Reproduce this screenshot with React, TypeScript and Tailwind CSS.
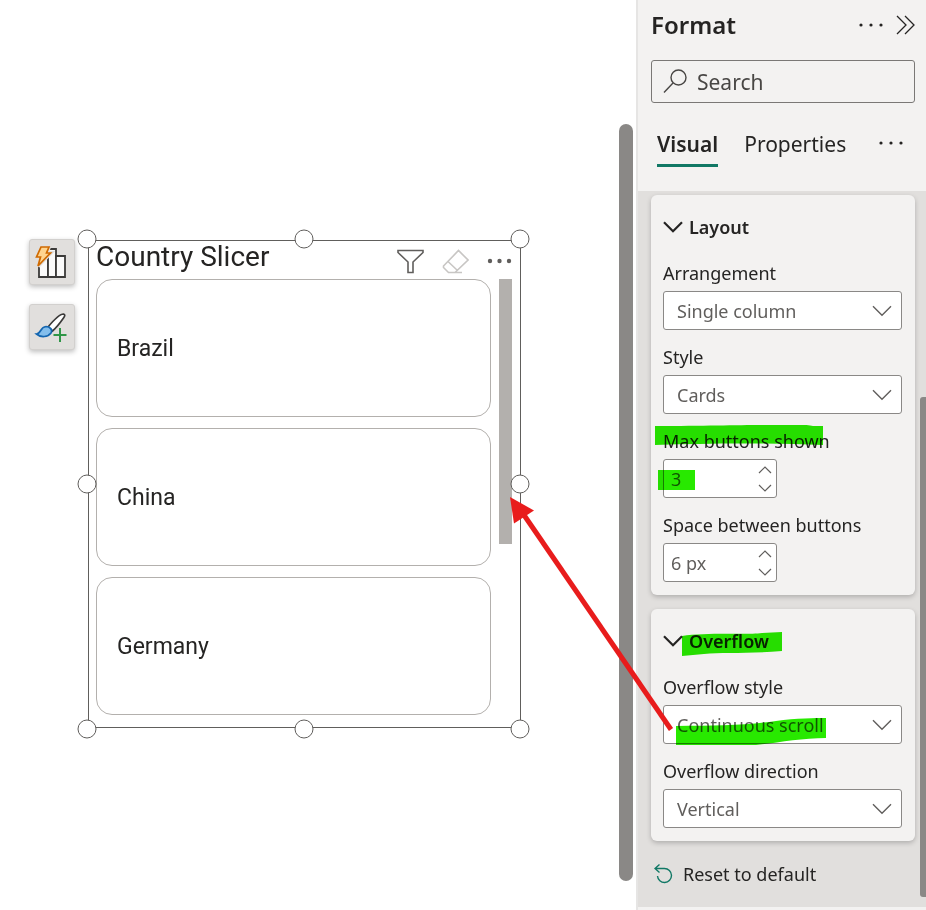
import type { ReactNode } from "react";

const countries = ["Brazil", "China", "Germany"];

const handles = [
  "left-0 top-0",
  "left-1/2 top-0",
  "left-full top-0",
  "left-0 top-1/2",
  "left-full top-1/2",
  "left-0 top-full",
  "left-1/2 top-full",
  "left-full top-full",
];

const MoreIcon = () => (
  <svg className="block" width="26" height="6" viewBox="0 0 26 6" fill="currentColor">
    <circle cx="3" cy="3" r="1.6" />
    <circle cx="13" cy="3" r="1.6" />
    <circle cx="23" cy="3" r="1.6" />
  </svg>
);

const Chevron = ({ className = "", weight = 1.4 }: { className?: string; weight?: number }) => (
  <svg className={className} width="20" height="12" viewBox="0 0 20 12" fill="none" stroke="currentColor" strokeWidth={weight}>
    <path d="M1 1.2 10 10.2 19 1.2" />
  </svg>
);

/* Marker stroke laid over a label */
const Marker = ({ className, d, viewBox }: { className: string; d: string; viewBox: string }) => (
  <svg className={`absolute pointer-events-none mix-blend-multiply ${className}`} viewBox={viewBox} fill="#28e900">
    <path d={d} />
  </svg>
);

const Field = ({ id, label, marker, children }: { id: string; label: string; marker?: ReactNode; children: ReactNode }) => (
  <div className="relative flex flex-col items-start gap-1.5">
    <label htmlFor={id} className="text-[18px] leading-6 text-[#252423] whitespace-nowrap">
      {label}
    </label>
    {children}
    {marker}
  </div>
);

const SelectBox = ({ id, value }: { id: string; value: string }) => (
  <div className="relative w-full">
    <select
      id={id}
      defaultValue={value}
      className="appearance-none w-full h-[39px] rounded-[3px] border border-[#8a8886] bg-white pt-0.5 pl-[13px] pr-10 text-[18px] text-[#605e5c]"
    >
      <option>{value}</option>
    </select>
    <Chevron className="absolute right-[10px] top-[14px] text-[#605e5c] pointer-events-none" />
  </div>
);

const Spinner = ({ id, value }: { id: string; value: string }) => (
  <div className="flex items-center w-[114px] h-[39px] rounded-[3px] border border-[#8a8886] bg-white pl-[7px] pr-1">
    <input id={id} defaultValue={value} className="min-w-0 flex-1 bg-transparent pt-0.5 text-[18px] text-[#605e5c] outline-none" />
    <div className="flex flex-col gap-2.5 text-[#605e5c]">
      <button aria-label="Increase">
        <svg width="14" height="8" viewBox="0 0 14 8" fill="none" stroke="currentColor" strokeWidth="1.2" className="block">
          <path d="M1 7 7 1 13 7" />
        </svg>
      </button>
      <button aria-label="Decrease">
        <svg width="14" height="8" viewBox="0 0 14 8" fill="none" stroke="currentColor" strokeWidth="1.2" className="block">
          <path d="M1 1 7 7 13 1" />
        </svg>
      </button>
    </div>
  </div>
);

const Section = ({ title, marker, children }: { title: string; marker?: ReactNode; children: ReactNode }) => (
  <section className="relative rounded-md bg-[#f3f2f1] pl-3 pr-[13px] pt-[18px] pb-[13px] shadow-[0_2px_5px_rgba(0,0,0,0.22)]">
    <h2 className="mb-5">
      <button className="flex items-center gap-1.5 text-[18px] leading-7 font-semibold text-[#252423]">
        <Chevron weight={2.2} />
        {title}
      </button>
    </h2>
    {marker}
    <div className="flex flex-col gap-[15px]">{children}</div>
  </section>
);

const Slicer = () => (
  <div className="relative mt-px flex-1 border border-[#605e5c] pl-[7px] pr-2 pb-3 font-[Roboto,sans-serif]">
    <header className="flex items-center justify-between h-[38px] pb-1.5">
      <h1 className="text-[28px] leading-8 text-[#252423] whitespace-nowrap">Country Slicer</h1>
      <div className="flex items-center gap-[18px] pt-2 text-[#605e5c]">
        <button aria-label="Filters">
          <svg width="27" height="25" viewBox="0 0 27 25" fill="none" stroke="currentColor" strokeWidth="1.6" className="block">
            <path d="M1 1.5H26V3.5L16 13V23.5H11V13L1 3.5Z" />
          </svg>
        </button>
        <button aria-label="Clear selections" className="text-[#c8c6c4]">
          <svg width="27" height="25" viewBox="0 0 27 25" fill="none" stroke="currentColor" strokeWidth="1.6" className="block">
            <path d="M1.5 17 16.5 1.5 26 11 13 23.5H6.5L1.5 18.5ZM6 12.5 15.5 21.5M12 23.5H20" />
          </svg>
        </button>
        <button aria-label="More options">
          <svg width="25" height="6" viewBox="0 0 25 6" fill="currentColor" className="block">
            <circle cx="3" cy="3" r="2.2" />
            <circle cx="12.5" cy="3" r="2.2" />
            <circle cx="22" cy="3" r="2.2" />
          </svg>
        </button>
      </div>
    </header>
    <div className="flex gap-2">
      <div className="flex flex-1 flex-col gap-[11px]">
        {countries.map((country) => (
          <button
            key={country}
            className="h-[138px] rounded-[16px] border border-[#b3b0ad] px-5 pt-0.5 text-left text-[23px] text-[#252423]"
          >
            {country}
          </button>
        ))}
      </div>
      <div className="w-[13px] h-[265px] bg-[#b3b0ad]" />
    </div>
    {/* Resize handles */}
    <div className="absolute -left-0.5 right-0 -top-0.5 -bottom-0.5 pointer-events-none">
      {handles.map((place) => (
        <span
          key={place}
          className={`absolute ${place} size-[19px] -translate-x-1/2 -translate-y-1/2 rounded-full border border-[#605e5c] bg-white`}
        />
      ))}
    </div>
  </div>
);

const toolButton =
  "flex size-[46px] items-center justify-center rounded-[3px] border border-[#d2d0ce] bg-[#e1dfdd] pr-0.5 shadow-[0_2px_5px_rgba(0,0,0,0.25)]";

const Canvas = () => (
  <main className="flex flex-1 items-start pl-[29px] pr-[3px]">
    <div className="flex flex-1 items-start gap-[13px] pt-[239px]">
      <div className="flex flex-col gap-[19px]">
        <button aria-label="Suggested visuals" className={toolButton}>
          <svg width="34" height="34" viewBox="0 0 34 34">
            <g fill="#fafafa" stroke="#3b3a39" strokeWidth="1.8">
              <path d="M5 13H14V32H5Z" />
              <path d="M14 4H22V32H14Z" />
              <path d="M22 11H31V32H22Z" />
            </g>
            <path d="M7 2H15L12.5 8H16.5L4 21 6.5 12H2.5Z" fill="#ffd78a" stroke="#e1dfdd" strokeWidth="4" />
            <path d="M7 2H15L12.5 8H16.5L4 21 6.5 12H2.5Z" fill="#ffd590" stroke="#d06a00" strokeWidth="1.7" />
          </svg>
        </button>
        <button aria-label="Format visual" className={toolButton}>
          <svg width="34" height="34" viewBox="0 0 34 34" fill="none">
            <path d="M14 17C19 11 26 4 29.5 4Q32 4.500 29.5 8C26 13 22 18 18.5 21Z" fill="#fff" stroke="#3b3a39" strokeWidth="1.7" />
            <path d="M2.5 24C7 24 6 17 12 16.5 16 16.5 19 20 17 23 14 27 7 28 2.5 24Z" fill="#83beec" stroke="#1466b0" strokeWidth="1.7" />
            <path d="M26 18V32M19.5 25H32.5" stroke="#2f9647" strokeWidth="2" />
          </svg>
        </button>
      </div>
      <Slicer />
    </div>
    <div className="ml-[98px] mt-[124px] mb-[29px] w-[14px] self-stretch rounded-full bg-[#8a8886]" />
  </main>
);

const FormatPane = () => (
  <aside className="relative flex w-[290px] shrink-0 flex-col border-l-2 border-[#e6e5e4] bg-[#f3f2f1] pb-[3px]">
    <div className="h-[191px] pl-[13px] pr-[11px] pt-[7px]">
      <div className="flex items-center justify-between">
        <h1 className="text-[24px] leading-9 font-semibold text-[#252423]">Format</h1>
        <div className="flex items-center gap-3 text-[#252423]">
          <button aria-label="Pane options">
            <MoreIcon />
          </button>
          <button aria-label="Collapse pane">
            <svg width="19" height="20" viewBox="0 0 19 20" fill="none" stroke="currentColor" strokeWidth="1.3" className="block">
              <path d="M1 1 10 10 1 19M9 1 18 10 9 19" />
            </svg>
          </button>
        </div>
      </div>
      <div className="mt-[17px] flex h-[43px] items-center gap-2.5 rounded-[3px] border border-[#7a7876] pl-[11px] pr-3">
        <svg width="24" height="25" viewBox="0 0 24 25" fill="none" stroke="#484644" strokeWidth="1.4" className="shrink-0">
          <circle cx="15.5" cy="8.5" r="7.5" />
          <path d="M10 14 1 23.5" />
        </svg>
        <input
          aria-label="Search"
          placeholder="Search"
          className="min-w-0 flex-1 bg-transparent pt-0.5 text-[21px] text-[#484644] placeholder-[#484644] outline-none"
        />
      </div>
      <div className="mt-6 flex items-start pl-1.5 pr-[11px] text-[21px] leading-[34px] text-[#252423]">
        <button className="border-b-[3px] border-[#117865] pb-[3px] font-semibold">Visual</button>
        <button className="ml-[26px]">Properties</button>
        <button aria-label="More tabs" className="ml-auto py-[13px]">
          <MoreIcon />
        </button>
      </div>
    </div>

    <div className="flex flex-1 gap-[5px] bg-[#e1dfdd] pl-[13px]">
      <div className="flex min-w-0 flex-1 flex-col gap-[14px] pt-1">
        <Section title="Layout">
          <Field id="arrangement" label="Arrangement">
            <SelectBox id="arrangement" value="Single column" />
          </Field>
          <Field id="style" label="Style">
            <SelectBox id="style" value="Cards" />
          </Field>
          <Field
            id="max-buttons"
            label="Max buttons shown"
            marker={
              <>
                <Marker className="-left-2 -top-1 w-[168px] h-[22px]" viewBox="0 0 168 22" d="M0 1C50 1 80 0 110 0 130 -1 150 -1 158 1L168 1V20C120 18 60 18 0 20Z" />
                <Marker className="-left-[5px] top-[41px] w-[37px] h-5" viewBox="0 0 37 20" d="M0 0H37V20H0Z" />
              </>
            }
          >
            <Spinner id="max-buttons" value="3" />
          </Field>
          <Field id="spacing" label="Space between buttons">
            <Spinner id="spacing" value="6 px" />
          </Field>
        </Section>

        <Section
          title="Overflow"
          marker={<Marker className="left-[31px] top-[23px] w-[100px] h-6" viewBox="0 0 100 24" d="M0 4C25 0 65 3 80 1L100 0V19C65 22 40 20 22 22L0 24Z" />}
        >
          <Field
            id="overflow-style"
            label="Overflow style"
            marker={<Marker className="left-[13px] top-[43px] w-[150px] h-[27px]" viewBox="0 0 150 27" d="M0 8C40 8 75 7 100 3 120 0 140 0 150 0V20C125 20 100 25 80 27H0Z" />}
          >
            <SelectBox id="overflow-style" value="Continuous scroll" />
          </Field>
          <Field id="overflow-direction" label="Overflow direction">
            <SelectBox id="overflow-direction" value="Vertical" />
          </Field>
        </Section>

        <button className="flex items-center gap-2.5 self-start pl-[3px] pt-[5px] text-[18px] leading-7 text-[#252423]">
          <svg width="19" height="20" viewBox="0 0 19 20" fill="none" stroke="#117865" strokeWidth="1.4">
            <path d="M5.5 0.5 1 4.5 5.5 8.5M1 4.5H10.500A7 7 0 1 1 3.500 12" />
          </svg>
          Reset to default
        </button>
      </div>
      <div className="mt-[206px] mb-2.5 w-1.5 rounded-l-[3px] bg-[#8a8886]" />
    </div>

    {/* Callout arrow from the overflow setting to the slicer scrollbar */}
    <svg className="absolute -left-[128px] top-[497px] pointer-events-none" width="164" height="236" viewBox="0 0 164 236">
      <path d="M14 18 161 232.5" stroke="#e81c1c" strokeWidth="5" />
      <path d="M0 0 24 13.5 4 26.5Z" fill="#e81c1c" />
    </svg>
  </aside>
);

export default function App() {
  return (
    <div className="flex min-h-screen bg-white font-['Noto_Sans',sans-serif]">
      <Canvas />
      <FormatPane />
    </div>
  );
}
